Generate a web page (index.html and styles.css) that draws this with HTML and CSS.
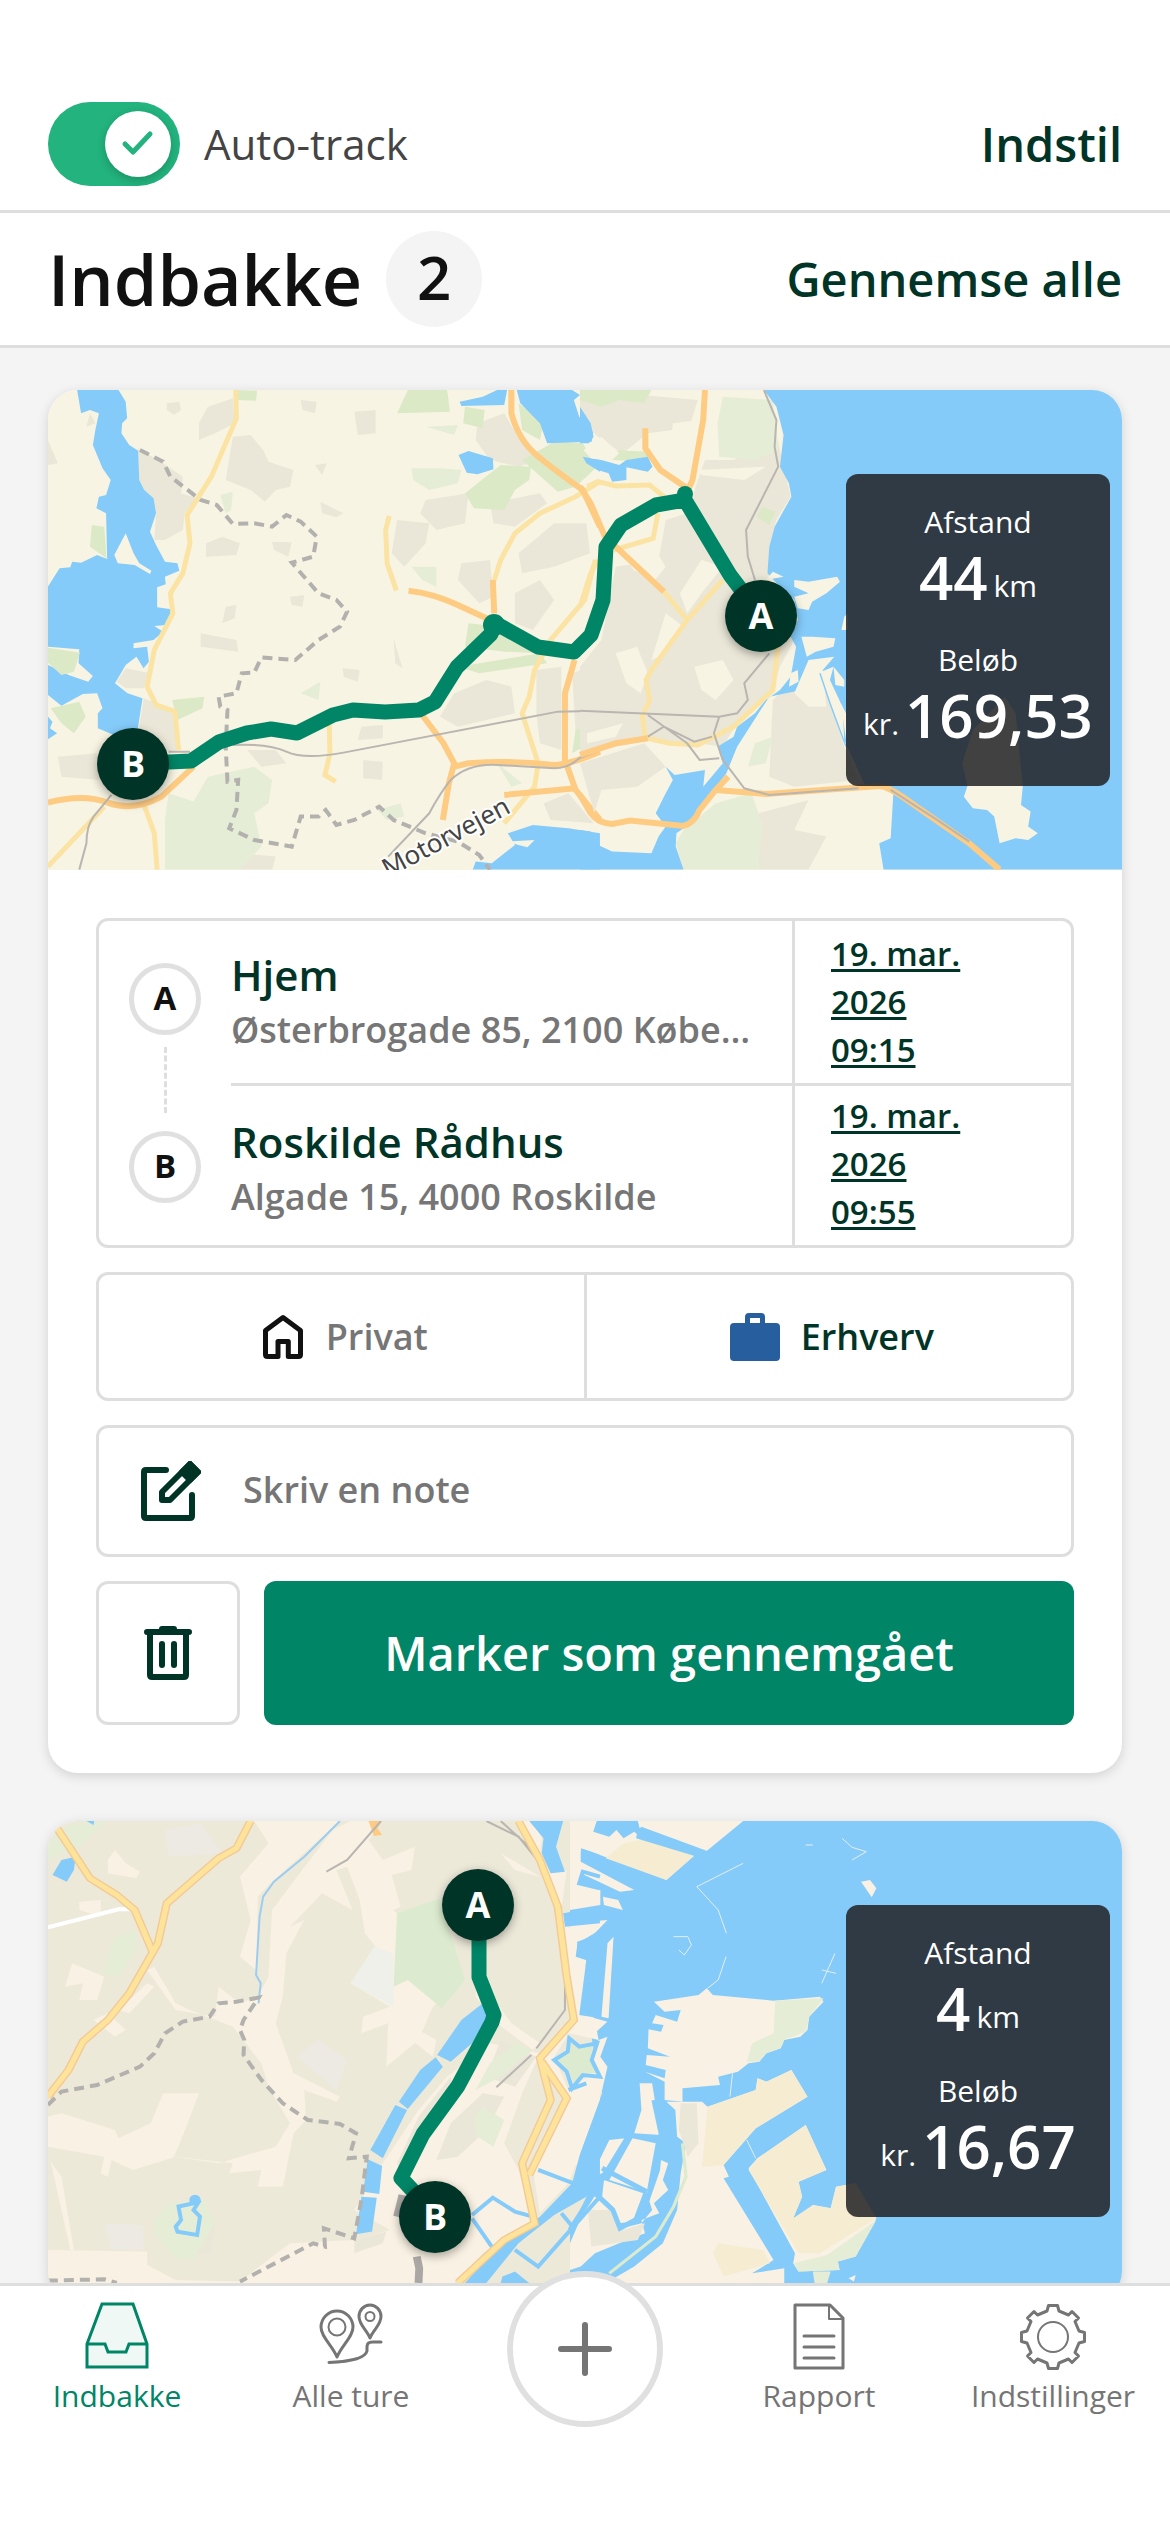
FILE: index.html
```html
<!DOCTYPE html>
<html lang="da">
<head>
    <meta charset="UTF-8">
    <meta name="viewport" content="width=device-width, initial-scale=1.0">
    <title>Indbakke</title>
    <link rel="stylesheet" href="styles.css">
</head>
<body>
    <!-- Auto-track bar -->
    <header class="top-bar">
        <label class="switch-label">
            <span class="switch">
                <input type="checkbox" class="switch-input" checked>
                <span class="switch-knob">
                    <svg width="36" height="30" viewBox="0 0 36 30"><path d="M5 15 L13 23 L30 5" fill="none" stroke="#22b37e" stroke-width="5" stroke-linecap="round" stroke-linejoin="round"/></svg>
                </span>
            </span>
            Auto-track
        </label>
        <button class="link-btn">Indstil</button>
    </header>

    <!-- Page title -->
    <div class="title-bar">
        <h1>Indbakke</h1>
        <span class="count">2</span>
        <button class="link-btn">Gennemse alle</button>
    </div>

    <main class="trips">
        <!-- Trip 1 -->
        <article class="card">
            <div class="map">
                <svg class="map-svg" viewBox="0 0 1074 480" preserveAspectRatio="xMidYMid slice">
                    <rect width="1074" height="480" fill="#f8f4e3"/>
                    <!-- West half -->
                    <g transform="matrix(.3571 0 0 .3333 -8 -10)">
                        <g class="urban">
                            <path d="M275 205 L345 250 L400 290 L395 340 L440 355 L405 400 L400 450 L350 480 L320 480 L325 400 L278 300Z"/>
                            <path d="M470 80 L540 55 L545 130 L490 160 L445 180 L445 130Z"/>
                            <path d="M540 170 L590 165 L625 210 L640 245 L710 270 L700 320 L660 330 L630 365 L590 330 L520 300Z"/>
                            <path d="M355 70 L390 65 L395 90 L375 105 L355 90Z M730 60 L775 65 L770 100 L735 90Z M880 95 L940 90 L940 160 L890 165Z"/>
                            <path d="M785 365 L850 400 L830 412 L790 400Z M465 490 L510 470 L560 490 L550 525 L465 530Z M650 485 L705 487 L695 530 L655 510Z"/>
                            <path d="M520 680 L550 675 L545 715 L510 730Z M450 760 L550 780 L555 815 L450 800Z M990 775 L1015 865 L995 850Z M848 865 L895 870 L890 905 L850 890Z"/>
                            <path d="M700 650 L740 645 L735 680 L705 675Z M770 255 L803 250 L790 285Z M905 1140 L960 1145 L958 1200 L905 1195Z"/>
                            <path d="M290 955 L375 990 L385 1110 L340 1115 L275 1060Z M215 905 L240 865 L310 880 L290 925 L240 925Z"/>
                            <path d="M1225 130 L1300 100 L1350 190 L1400 240 L1340 260 L1260 240 L1220 180Z"/>
                            <path d="M1000 420 L1090 430 L1080 490 L1020 560 L985 520Z M1080 360 L1200 340 L1190 430 L1110 450 L1065 400Z"/>
                            <path d="M1260 370 L1400 340 L1420 370 L1330 440 L1270 430Z M1180 550 L1260 540 L1270 650 L1230 670 L1170 600Z"/>
                            <path d="M1340 520 L1440 430 L1530 430 L1540 520 L1440 560 L1350 580Z M1330 640 L1400 600 L1440 660 L1380 750 L1330 730Z"/>
                            <path d="M1160 940 L1250 900 L1320 920 L1330 1000 L1170 1040 L1120 1010Z M1390 870 L1460 860 L1460 1110 L1400 1090 L1390 1000Z M1490 880 L1568 850 L1568 1010 L1500 1060Z"/>
                            <path d="M900 1040 L960 1035 L960 1075 L890 1080Z M580 1110 L660 1110 L690 1150 L620 1160Z M560 1420 L660 1430 L650 1469 L555 1469Z M1410 1270 L1480 1240 L1550 1330 L1430 1320Z"/>
                            <path d="M50 1130 L160 1120 L165 1200 L60 1190Z M22 180 L50 250 L22 255Z M140 100 L155 130 L130 140Z"/>
                        </g>
                        <g class="park">
                            <path d="M1030 30 L1140 30 L1148 95 L1000 100Z M550 30 L608 32 L605 62 L552 60Z"/>
                            <path d="M1340 70 L1410 130 L1400 180 L1350 150Z M1190 80 L1245 90 L1240 145 L1185 130Z"/>
                            <path d="M1190 340 L1290 255 L1375 260 L1370 300 L1330 330 L1300 390 L1215 385Z M1350 240 L1440 185 L1520 190 L1560 260 L1500 320 L1450 335Z"/>
                            <path d="M145 435 L180 440 L186 535 L140 500Z M30 985 L110 965 L128 1010 L95 1060 L60 1030Z"/>
                            <path d="M370 960 L460 950 L455 985 L385 1020Z M1200 730 L1330 745 L1400 820 L1300 815 L1190 800Z M1170 860 L1400 820 L1420 850 L1230 880Z"/>
                            <path d="M1500 1050 L1560 1030 L1540 1090 L1490 1120Z"/>
                        </g>
                        <g class="wood">
                            <path d="M1040 265 L1120 265 L1180 270 L1170 310 L1090 330 L1045 300Z M1080 140 L1170 135 L1160 165Z"/>
                            <path d="M470 1190 L600 1160 L650 1200 L640 1270 L600 1300 L620 1400 L560 1469 L350 1469 L350 1320 L360 1240 L430 1265Z"/>
                            <path d="M505 345 L540 335 L535 390 L520 400Z M1040 560 L1110 560 L1110 620 L1070 600Z M730 940 L785 905 L780 960Z"/>
                            <path d="M945 1290 L1010 1270 L1020 1310 L970 1320Z M1280 1150 L1350 1210 L1320 1220Z"/>
                        </g>
                        <g class="water">
                            <path d="M104 30 H220 L240 65 L244 115 L230 130 L228 160 L250 195 L275 212 L278 300 L292 330 L318 355 L325 400 L308 455 L325 495 L350 545 L385 550 L390 572 L350 590 L352 613 L328 622 V682 L368 688 L355 735 L320 738 L345 755 L318 780 L262 790 V805 L300 800 L305 845 L290 865 L270 830 L240 855 L210 910 L245 940 L287 955 L272 1060 L200 1062 L162 1045 V1000 L175 985 L160 940 L120 942 L60 977 L22 945 V620 L55 565 L85 562 L90 545 L115 548 L160 525 L188 537 L185 400 L158 385 L165 350 L185 345 L198 300 L175 265 L148 195 L155 150 L165 100 L140 90 L115 100Z"/>
                            <path d="M22 1010 L35 1025 L28 1045 L48 1060 L22 1078Z"/>
                            <path d="M1175 65 L1240 50 L1280 30 H1308 L1300 75 L1180 78Z M1172 225 L1200 213 L1268 235 L1270 268 L1225 283 L1195 278Z"/>
                            <path d="M1335 30 H1490 L1512 45 L1495 60 L1510 110 L1550 150 L1545 185 L1420 190 L1400 130 L1345 70Z M1520 230 L1568 240 V275 L1530 250Z"/>
                            <path d="M1212 1469 L1220 1445 L1265 1450 L1330 1395 L1310 1360 L1380 1335 L1480 1345 L1568 1360 V1469Z"/>
                        </g>
                        <path fill="#f8f4e3" d="M22 800 L110 808 L108 850 L148 888 L135 905 L80 885 L22 855Z M240 460 L262 520 L278 550 L312 572 L308 582 L265 555 L218 550 L208 525Z M1310 1385 L1385 1380 L1365 1402 L1340 1395Z"/>
                        <path class="park-fill" d="M22 803 L112 818 L95 875 L60 885 L22 848Z"/>
                        <g class="road">
                            <path d="M548 30 L550 115 L480 290 L412 405 L420 490 L400 580 L365 640 L372 700 L320 810 L300 920 L325 975 L378 995 L388 1110"/>
                            <path d="M978 408 L968 450 L972 550 L998 632 M1568 305 L1500 350 L1400 400 L1330 460 L1290 540 L1272 600 M1555 540 L1525 660 L1430 780 L1385 870 L1370 950 L1350 1000 L1395 1150 L1385 1220 L1300 1330"/>
                            <path d="M810 1035 L812 1120 L798 1185 L828 1205 M22 1460 L180 1280 M290 1270 L320 1360 L328 1469"/>
                        </g>
                        <g class="motorway">
                            <path d="M22 1268 Q120 1240 190 1268 T340 1250 L430 1160"/>
                            <path d="M1320 30 V100 Q1340 180 1390 225 T1520 330 L1568 440 M1268 600 L1272 700 M1032 632 Q1100 640 1170 675 L1250 715"/>
                            <path d="M1070 1005 L1130 1090 L1160 1150 L1145 1210 L1128 1320 M1160 1160 L1200 1150 Q1320 1140 1440 1155 Q1480 1155 1568 1115"/>
                            <path d="M1497 840 L1470 940 V1140 L1500 1230 L1568 1320 M1300 1245 L1500 1225"/>
                        </g>
                        <g class="rail">
                            <path d="M360 1115 L420 1115 M540 1095 Q640 1090 690 1115 T850 1118 L1450 995 L1568 992 M1568 1110 L1510 1135 Q1480 1165 1440 1165 L1280 1155 Q1200 1150 1150 1200 Q1120 1240 1090 1300 L975 1430 M200 1245 L150 1310 Q130 1340 130 1390 L110 1469"/>
                        </g>
                        <path class="border" d="M280 210 L345 245 L365 290 L450 360 L495 375 L540 432 L600 430 L650 440 L690 405 L730 425 L775 470 L765 530 L705 548 L780 640 L830 660 L860 695 L840 740 L780 780 L715 840 L620 832 L600 878 L565 880 L550 940 L500 950 L505 980 L525 990 L520 1100 L525 1205 L555 1200 L550 1290 L530 1345 L600 1380 L705 1400 L730 1310 L780 1310 L800 1290 L830 1335 L880 1320 L950 1280 L990 1320 L1080 1360 L1170 1385 L1230 1425 L1260 1469"/>
                    </g>
                    <!-- East half -->
                    <g transform="matrix(.3571 0 0 .3333 532 -10)">
                        <g class="urban">
                            <path d="M0 60 L120 40 L330 60 L310 130 L260 150 L190 160 L120 220 L60 180 L0 120Z"/>
                            <path d="M350 240 L430 240 L500 200 L550 160 L570 260 L590 350 L550 420 L530 500 L530 600 L600 780 L560 860 L540 930 L440 1030 L400 1100 L330 1090 L200 1080 L100 1100 L0 1120 V860 L60 780 L100 560 L220 540 L240 420 L300 400 L330 300Z"/>
                            <path d="M620 880 L660 850 L700 960 L740 1100 L780 1200 L600 1220 L530 1190 L540 960Z M0 1150 L180 1090 L240 1160 L160 1220 L60 1230 L40 1300Z M500 1300 L640 1260 L600 1350 L690 1370 L640 1469 L500 1469Z"/>
                        </g>
                        <g class="wood">
                            <path d="M400 50 L540 60 L555 210 L490 240 L390 230 L385 130Z M490 1090 L540 1070 L520 1150 L470 1160Z"/>
                            <path d="M290 1350 L380 1270 L480 1240 L510 1330 L500 1469 H290 L268 1390Z"/>
                        </g>
                        <g class="park">
                            <path d="M0 30 L200 30 L180 70 L110 60 L60 80 L0 60Z M80 210 L200 215 L180 245 L90 240Z M510 380 L548 395 L530 435 L495 410Z"/>
                        </g>
                        <path fill="#f8f4e3" d="M10 210 L60 170 L110 220 L90 240 L30 235Z M260 130 L330 120 L320 200 L250 215Z M120 520 L200 490 L240 560 L210 600 L150 570Z M340 540 L400 560 L340 640 L300 700 L280 640Z M100 820 L160 800 L190 880 L170 940 L130 910Z M240 700 L290 740 L240 820 L200 840Z M20 1060 L120 1030 L100 1070 L20 1090Z M330 270 L520 260 L460 300 L340 285Z M320 860 L400 840 L430 900 L380 960 L340 930Z"/>
                        <g class="water">
                            <path d="M515 30 H1530 V1469 H850 L838 1390 L870 1375 L878 1230 L800 1220 L770 1150 L740 1080 L735 980 L700 900 L710 860 L665 880 L670 900 L620 930 L530 950 L470 1050 L440 1100 L410 1180 L370 1235 L310 1330 L270 1360 L268 1400 L290 1469 H0 V1350 L30 1355 L40 1390 L90 1415 L200 1420 L220 1370 L240 1340 L212 1300 L240 1240 L260 1200 L240 1160 L265 1185 L350 1170 L345 1220 L400 1150 L385 1100 L430 1070 L440 1040 L490 1000 L520 960 L560 930 L590 890 L605 800 L590 770 L610 720 L600 660 L560 620 L525 580 L530 500 L545 440 L592 350 L585 310 L560 260 L570 165 L550 80Z"/>
                            <path d="M0 80 L30 130 L38 170 L25 190 L0 190Z M10 235 L60 240 L110 255 L130 240 L190 230 L203 260 L190 275 L130 262 V300 L90 305 L80 280 L50 270Z"/>
                        </g>
                        <path fill="#f8f4e3" d="M600 600 L640 605 L720 590 L728 605 L690 640 L650 665 L640 690 L610 685 L600 650 L640 640 L600 620Z M620 770 L650 770 L715 775 L710 800 L660 815 L635 830Z M740 710 L750 700 V750 L732 750Z M540 575 L570 590 L520 600Z M590 880 L610 870 L612 905 L585 920Z M640 840 L712 830 L680 870 L690 980 L640 980 L600 940Z M710 860 L740 900 V920 L715 915Z M730 970 L745 1000 V1080Z"/>
                        <path fill="#f8f4e3" d="M1085 1218 L1070 1150 L1100 1050 L1190 950 L1220 1000 L1240 1218 L1235 1275 L1262 1295 L1255 1340 L1282 1360 L1255 1380 L1220 1375 L1175 1390 L1160 1310 L1140 1290 L1100 1285 L1075 1250Z"/>
                        <path class="canal" stroke-width="4" d="M672 880 L700 970 L745 1100"/>
                        <g class="road">
                            <path d="M20 320 L50 305 L100 318 L195 315 L235 350 M95 510 L205 475 L218 400 M0 680 L30 580 L50 540 M400 600 L300 720 L200 870 L185 900 L195 960 L175 1010 L182 1070 M235 635 L300 720 M555 800 L540 930 L430 1040 L330 1095 L250 1090 L190 1075"/>
                        </g>
                        <g class="motorway">
                            <path d="M350 30 L345 120 L315 300 L300 335 M183 145 V205 L225 270 L300 325 M0 320 L30 370 L70 470 L140 540 L235 635"/>
                            <path d="M0 1125 L100 1090 L190 1075 M0 1245 L30 1300 Q50 1330 90 1332 L140 1322 L290 1338 Q320 1330 335 1290 L380 1230 L415 1190 M380 1230 L520 1242 L840 1218 Q860 1220 900 1248 L1090 1390 L1175 1469"/>
                        </g>
                        <g class="rail">
                            <path d="M515 30 L550 120 L545 200 L555 260 L465 450 L470 530 L490 600 M530 820 L460 910 L470 960 L440 1000 L390 1010 L0 992 M390 1010 L375 1060 L400 1140 L460 1225 L530 1245 L780 1225 M190 1005 L300 1090 L335 1140 L390 1135 M190 1070 L235 1040 L320 1085 L370 1070 M870 1230 L1000 1320 L1090 1385"/>
                        </g>
                    </g>
                    <text class="map-label" transform="translate(340 488) rotate(-28)">Motorvejen</text>
                    <path class="route" d="M85 374 L121 372 L143 371 L171 352 L199 343 L223 339 L249 343 L285 325 L305 320 L337 322 L371 320 L387 312 L409 277 L443 244 L447 233 L490 257 L526 262 L543 245 L555 210 L558 157 L573 135 L608 115 L637 110 L682 185 L713 226"/>
                    <circle cx="446" cy="235" r="11" fill="#008566"/>
                    <circle cx="637" cy="104" r="8" fill="#008566"/>
                    <circle class="marker" cx="713" cy="226" r="36"/>
                    <text class="marker-text" x="713" y="239">A</text>
                    <circle class="marker" cx="85" cy="374" r="36"/>
                    <text class="marker-text" x="85" y="387">B</text>
                </svg>
                <div class="stats">
                    <span class="stat-label">Afstand</span>
                    <div class="stat-value"><strong>44</strong><small>km</small></div>
                    <span class="stat-label">Beløb</span>
                    <div class="stat-value"><small>kr.</small><strong>169,53</strong></div>
                </div>
            </div>

            <div class="card-body">
                <div class="route-box">
                    <div class="points">
                        <span class="point">A</span>
                        <span class="point-line"></span>
                        <span class="point">B</span>
                    </div>
                    <div class="place">
                        <span class="place-name">Hjem</span>
                        <span class="place-address">Østerbrogade 85, 2100 København Ø</span>
                    </div>
                    <div class="date"><a href="#">19. mar. 2026<br>09:15</a></div>
                    <div class="place">
                        <span class="place-name">Roskilde Rådhus</span>
                        <span class="place-address">Algade 15, 4000 Roskilde</span>
                    </div>
                    <div class="date"><a href="#">19. mar. 2026<br>09:55</a></div>
                </div>

                <div class="choices">
                    <label class="choice">
                        <input type="radio" name="type1" class="choice-input">
                        <svg width="44" height="48" viewBox="0 0 44 48" fill="none" stroke="#111" stroke-width="5" stroke-linejoin="round"><path d="M22 4.500 L39.500 17.500 V41.500 Q39.500 43.500 37.500 43.500 H27.300 V28.500 H17 V43.500 H6.500 Q4.500 43.500 4.500 41.500 V17.500Z"/></svg>
                        Privat
                    </label>
                    <label class="choice">
                        <input type="radio" name="type1" class="choice-input" checked>
                        <svg width="50" height="48" viewBox="0 0 50 48" fill="#275f9e"><path fill-rule="evenodd" d="M15 10 V4 Q15 0 19 0 H31 Q35 0 35 4 V10 H46 Q50 10 50 14 V44 Q50 48 46 48 H4 Q0 48 0 44 V14 Q0 10 4 10Z M20 5 V10 H30 V5Z"/></svg>
                        Erhverv
                    </label>
                </div>

                <label class="note">
                    <svg width="60" height="60" viewBox="0 0 60 60" fill="none" stroke="#003427" stroke-width="6" stroke-linecap="round" stroke-linejoin="round"><path d="M25 9 H5 Q3 9 3 11 V55 Q3 57 5 57 H49 Q51 57 51 55 V34"/><path d="M21 39 V31 L49 3 L57 11 L29 39Z"/><path d="M41 11 L49 3 L57 11 L49 19Z" fill="#003427"/></svg>
                    <input type="text" class="note-input" placeholder="Skriv en note" aria-label="Skriv en note">
                </label>

                <div class="actions">
                    <button class="delete-btn" aria-label="Slet">
                        <svg width="48" height="54" viewBox="0 0 48 54" fill="none" stroke="#003427" stroke-width="6" stroke-linecap="round" stroke-linejoin="round"><path d="M3 6 H45 M18 3 H30 M6 6 V49 Q6 51 8 51 H40 Q42 51 42 49 V6 M18 18 V39 M30 18 V39"/></svg>
                    </button>
                    <button class="primary-btn">Marker som gennemgået</button>
                </div>
            </div>
        </article>

        <!-- Trip 2 -->
        <article class="card">
            <div class="map">
                <svg class="map-svg" viewBox="0 0 1074 480" preserveAspectRatio="xMidYMid slice">
                    <rect width="1074" height="480" fill="#ede9d9"/>
                    <!-- East half -->
                    <g transform="matrix(.3571 0 0 .3333 522 -11)">
                        <path class="water" d="M0 300 L105 290 V33 H1548 V1419 H120 L0 1419 V1260 L60 1130 L20 1040 L90 850 L60 680 L100 640 L0 620Z"/>
                        <path fill="#84cbfa" d="M60 33 H200 V300 H0 V150 L40 115Z"/>
                        <g fill="#f9f1e3">
                            <path d="M0 33 H75 L65 65 L110 80 L130 60 L150 85 L180 65 L190 75 L350 135 L270 210 L60 125 L30 115 L30 155 L180 240 L140 245 L30 190 L22 220 L85 240 V285 L0 300Z M190 33 H485 L380 125 L195 55Z M92 260 L135 270 L148 300 L95 285Z"/>
                            <path d="M0 340 L105 330 L60 380 L20 395 L15 440 L45 470 L30 600 L70 625 L105 635 L75 660 L80 690 L0 670Z M105 400 L122 380 L108 625 L88 620Z"/>
                            <path d="M235 575 L265 605 L310 600 L300 635 L240 615 L230 640 L262 645 L255 665 L220 658 L218 715 L280 740 L215 735 L212 765 L268 780 L265 805 L210 785 L265 815 V870 L315 875 V835 L420 825 L415 800 L470 785 L500 760 L530 755 L550 730 L590 715 L600 690 L645 680 L665 660 L670 620 L710 575 L700 560 L570 572 L400 555 L383 535 L360 555 L300 565Z"/>
                            <path d="M315 875 H370 L385 890 L520 840 L525 805 L550 815 L620 780 L665 860 L520 955 L430 1065 L445 1100 L430 1105 L570 1350 L510 1390 L600 1375 V1419 H100 L180 1370 L260 1300 L300 1200 L310 1090 L325 1000 L300 980 L295 900 L270 875Z"/>
                            <path d="M80 690 L105 680 L85 740 L105 770 L90 840 L0 1050 V830 L50 800Z M195 820 L230 820 L245 920 L255 975 L180 970 L200 900Z M175 985 L240 1000 L215 1145 L110 1110Z M95 1110 L205 1150 L175 1235 L135 1240 L120 1190 L90 1160Z M10 1055 L50 1010 L30 1080Z"/>
                            <path d="M0 1300 L60 1150 L120 1200 L145 1255 L200 1240 L230 1200 L215 1150 L255 1050 L275 1060 L260 1110 L275 1140 L235 1180 L250 1210 L200 1230 L210 1270 L160 1290 L70 1330 L30 1370 L0 1380Z M110 990 L155 985 L130 1040 L90 1090 L60 1100Z"/>
                            <path d="M500 1075 L525 1045 L660 945 L718 1080 L640 1115 L650 1160 L625 1225 L650 1220 L680 1185 L730 1195 L745 1130 L800 1120 L858 1225 L800 1340 L750 1355 L755 1380 L640 1385 L625 1360 L630 1330Z"/>
                            <path d="M815 215 L840 210 L858 235 L845 262Z M780 1405 L800 1395 L795 1415Z"/>
                        </g>
                        <g fill="#f6ecd2">
                            <path d="M220 85 L350 135 L270 210 L100 145 L150 100Z M385 890 L520 840 L525 805 L550 815 L620 780 L665 860 L520 955 L430 1065 L370 1070Z M415 1300 L540 1320 L560 1360 L430 1400 L400 1330Z"/>
                            <path d="M525 1045 L660 945 L718 1080 L640 1115 L650 1160 L625 1225 L680 1185 L730 1195 L745 1130 L800 1120 L858 1225 L700 1330 L640 1330 L500 1080Z"/>
                        </g>
                        <g class="urban">
                            <path d="M310 880 L355 880 L360 1000 L330 1040 L305 960Z M50 1200 L120 1200 L150 1260 L210 1240 L190 1290 L60 1310Z M0 890 L50 850 L30 950 L0 1000Z"/>
                        </g>
                        <g class="wood">
                            <path d="M575 572 L710 565 L670 620 L660 665 L600 690 L590 715 L550 730 L530 755 L495 755 L510 700 L570 670Z M625 1360 L720 1335 L858 1230 L800 1340 L750 1355 L755 1380 L640 1385Z M680 1385 L730 1385 L720 1419 H685Z"/>
                        </g>
                        <path class="water" d="M190 60 L200 50 L390 125 L370 145 L185 85Z"/>
                        <g class="canal" stroke-width="5">
                            <path d="M90 1075 L215 1145 M0 1260 L60 1160 L160 985 M235 870 L255 970 L245 1080 L200 1220 L140 1255 L120 1200 L60 1140"/>
                        </g>
                        <path fill="none" stroke="#dcebcf" stroke-width="9" d="M315 1000 L325 1100 L290 1190 L240 1280 L110 1390"/>
                        <path class="shoal" d="M355 230 L485 160 M355 230 L415 300 L438 370 M437 440 L415 510 L385 535 M762 85 L790 112 L830 125 L790 150 M742 430 L705 520 M705 480 L745 490 M660 105 L680 105 M495 990 L520 1045 M455 790 L448 860 M290 380 L330 380 L340 405 L320 435 L305 420"/>
                    </g>
                    <!-- West half -->
                    <g transform="matrix(.3571 0 0 .3333 -8 -11)">
                        <g fill="#f9f1e3">
                            <path d="M600 33 L840 33 L650 215 L610 260 L605 480 L560 440 L590 330 L560 200 L640 100Z"/>
                            <path d="M870 33 L960 33 L920 90 L960 150 L1050 110 L1040 180 L985 195 L1010 290 L990 300 L1190 510 L1100 590 L1060 690 L970 770 L975 640 L900 670 L905 620 L980 590 L870 520 L940 410 L910 370 L895 270 L860 170 L830 180 L875 300 L790 250 L700 350 L740 330 L690 430 L680 560 L660 640 L710 790 L840 860 L830 875 L740 840 L745 930 L710 970 L680 1130 L610 1130 L620 1080 L530 1090 L540 1060 L380 1040 L260 1080 L200 1050 L190 1100 L170 1090 L180 1040 L22 1010 V920 L60 910 L210 960 L220 985 L310 940 L345 850 L445 850 L410 950 L375 1040 L500 1060 L660 1010 L700 940 L640 830 L620 760 L540 650 L420 600 L380 580 L320 470 L300 480 L380 600 L490 620 L500 530 L560 580 L610 560 L640 500 L650 300 L720 200 L820 60Z"/>
                            <path d="M190 150 L210 120 L240 160 L280 185 L270 205 L190 190Z M110 275 L170 270 L170 320 L110 300Z M90 460 L180 500 L160 570 L110 570 L120 520 L70 530Z M150 630 L190 610 L240 660 L210 680Z M220 600 L300 520 L320 530 L250 610Z"/>
                            <path d="M30 1055 L60 1100 L95 1320 L85 1320Z M22 1320 L300 1325 L300 1365 L380 1410 L560 1415 L700 1300 L880 1290 L980 1260 L880 1200 L960 1060 L1060 900 L1140 800 L1260 700 L1400 730 L1350 850 L1300 1000 L1340 1080 L1380 1240 L1240 1330 L1160 1419 L22 1419Z"/>
                            <path d="M1040 690 L1100 740 L1110 690 L1060 660Z M1220 490 L1320 640 L1400 700 L1380 720 L1280 640 L1220 560Z M1290 130 L1370 180 L1400 200 L1330 180Z"/>
                            <path d="M1350 33 L1380 33 L1405 85 L1400 130 L1430 190 L1475 180 L1460 300 L1480 350 L1505 400 L1500 440 L1530 450 L1510 615 L1500 640 L1440 740 L1480 840 L1568 830 L1568 870 L1510 1040 L1480 1120 L1400 1210 L1380 1080 L1480 870 L1410 750 L1495 630 L1475 500 L1450 290Z"/>
                        </g>
                        <g class="urban">
                            <path d="M1150 940 L1240 850 L1300 860 L1250 960 L1170 1040 L1110 1050Z M1060 920 L1150 800 L1160 850 L1090 960 L1020 1110 L1000 1060Z M1290 690 L1390 740 L1330 830 L1250 800Z M880 1290 L970 1265 L960 1300 L880 1330Z M400 1230 L490 1250 L480 1330 L400 1340Z"/>
                        </g>
                        <g class="wood">
                            <path d="M22 90 L90 40 L190 33 L110 110 L22 150Z M210 380 L270 360 L270 420 L220 500 L175 490Z M320 1230 L360 1180 L460 1170 L490 1240 L430 1350 L380 1345 L320 1270Z"/>
                            <path d="M1215 920 L1240 890 L1300 930 L1270 1010 L1225 980Z M1260 760 L1330 700 L1380 720 L1290 800 L1220 840Z"/>
                        </g>
                        <path fill="#dcebcf" d="M1000 310 L1120 265 L1190 510 L1125 595 L1030 510 L990 530Z"/>
                        <path fill="#ede9e3" d="M350 60 L450 40 L510 130 L360 140Z M720 740 L780 690 L860 750 L830 840Z M180 1240 L290 1245 L290 1320 L200 1320Z"/>
                        <path fill="#eff0ea" d="M935 410 L990 430 L990 590 L870 520Z"/>
                        <g class="water">
                            <path d="M60 150 L100 140 L95 180 L75 215 L35 195Z M130 33 H152 L150 45Z"/>
                            <path d="M1240 580 L1255 620 L1210 700 L1150 755 L1112 735 L1180 630Z M1108 742 L1128 770 L1030 897 L1005 875 L1065 780Z M995 885 L1028 900 L960 1045 L925 1020Z M918 1048 L958 1068 L950 1152 L905 1145Z M900 1160 L943 1163 L930 1265 L885 1273Z"/>
                            <path d="M1370 33 H1465 L1445 110 L1470 185 L1430 190 L1405 130 L1410 85Z M1515 115 L1568 135 V160 L1515 150Z M1465 310 L1568 290 V340 L1470 350Z M1505 400 L1568 360 V625 L1510 615 L1530 450 L1505 440Z"/>
                            <path d="M1568 870 V1100 L1530 1160 L1440 1215 L1340 1300 L1250 1419 H1190 L1300 1290 L1400 1220 L1490 1120 L1510 1040Z"/>
                            <path d="M1295 1400 L1330 1385 L1370 1419 H1290Z M1500 1380 L1568 1350 V1419 L1500 1400Z"/>
                        </g>
                        <path fill="#dcebcf" d="M1485 690 L1510 715 L1550 700 L1540 750 L1568 790 L1520 790 L1495 820 L1480 780 L1445 750 L1480 730Z"/>
                        <g class="canal" stroke-width="4">
                            <path d="M1482 685 L1510 710 L1560 700 L1545 750 L1568 800 L1520 795 L1490 835 L1475 785 L1440 750 L1478 725Z M1480 840 L1530 820"/>
                            <path d="M1568 200 L1520 185 L1510 220 L1568 235 M1395 1080 L1568 1150 M1210 1215 L1268 1163 L1330 1205 L1380 1220 M1210 1225 L1265 1310 M1330 1320 L1395 1370 L1568 1160 M1460 1210 L1495 1255"/>
                            <path d="M430 1160 L445 1175 L430 1200 L448 1220 L440 1275 L385 1265 L380 1250 L395 1230 L388 1190 L430 1180"/>
                        </g>
                        <circle cx="434" cy="1170" r="16" fill="#84cbfa"/>
                        <path class="stream" d="M840 33 L740 140 L655 215 L625 260 L615 320 L605 495 L618 520 L612 580"/>
                        <path fill="#fecb83" d="M920 33 H958 L945 55 L958 75 L935 78Z"/>
                        <path fill="none" stroke="#fff" stroke-width="12" d="M22 352 L220 298 L265 297 L272 320"/>
                        <g class="rail">
                            <path d="M955 33 L860 150 L802 185 M1250 33 L1340 80 L1400 160 L1440 280 L1470 460 V600 L1390 715 M1290 33 L1390 130 L1450 300 M1376 735 L1278 832"/>
                        </g>
                        <path fill="none" stroke="#aaa7a4" stroke-width="22" d="M1055 1340 L1062 1375 L1060 1419 M1015 1155 L1000 1220"/>
                        <g class="road-case">
                            <path d="M45 50 L140 205 L215 255 L265 300 L315 425 M590 33 L550 115 L500 145 L355 280 L330 400 L250 550 L190 630 L120 695 L80 780 L22 860"/>
                            <path d="M1340 33 L1400 150 L1450 290 L1475 500 L1495 630 L1400 745 L1430 870 L1350 1060 L1385 1240 L1300 1290 L1170 1419 M1405 755 L1475 865 L1370 1095"/>
                        </g>
                        <g class="road-core">
                            <path d="M45 50 L140 205 L215 255 L265 300 L315 425 M590 33 L550 115 L500 145 L355 280 L330 400 L250 550 L190 630 L120 695 L80 780 L22 860"/>
                            <path d="M1340 33 L1400 150 L1450 290 L1475 500 L1495 630 L1400 745 L1430 870 L1350 1060 L1385 1240 L1300 1290 L1170 1419 M1405 755 L1475 865 L1370 1095"/>
                        </g>
                        <path class="border" d="M22 885 L60 845 L160 825 L280 770 L320 730 L350 670 L400 635 L475 620 L500 580 L550 575 L612 563 L570 630 L560 660 L572 690 L570 735 L620 810 L680 880 L750 930 L840 942 L885 970 L865 1045 L915 1040 L900 1170 L880 1285 L795 1255 L798 1310 L765 1300 L560 1415 M22 1412 L180 1408 L215 1419"/>
                    </g>
                    <path class="route" d="M431 85 V156 L446 194 L444 201 L410 265 L375 313 L353 357 L369 374 L387 385"/>
                    <circle class="marker" cx="430" cy="84" r="36"/>
                    <text class="marker-text" x="430" y="97">A</text>
                    <circle class="marker" cx="387" cy="396" r="36"/>
                    <text class="marker-text" x="387" y="409">B</text>
                </svg>
                <div class="stats">
                    <span class="stat-label">Afstand</span>
                    <div class="stat-value"><strong>4</strong><small>km</small></div>
                    <span class="stat-label">Beløb</span>
                    <div class="stat-value"><small>kr.</small><strong>16,67</strong></div>
                </div>
            </div>
        </article>
    </main>

    <!-- Bottom navigation -->
    <nav class="tab-bar">
        <a href="#" class="tab active">
            <svg width="66" height="72" viewBox="0 0 66 72" fill="#eff8f5" stroke="#008566" stroke-width="3"><path d="M18 3 H49 L63 43 V66 H3 V43Z"/><path fill="none" d="M3 43 H21 L24 51 H42 L45 43 H63"/></svg>
            Indbakke
        </a>
        <a href="#" class="tab">
            <svg width="66" height="72" viewBox="0 0 66 72" fill="none" stroke="#757575" stroke-width="3" stroke-linecap="round" stroke-linejoin="round"><path d="M19 56 C14 44 3 36 3 26 A16 16 0 0 1 35 26 C35 36 24 44 19 56Z"/><circle cx="19" cy="26" r="8.500" stroke-width="2"/><path d="M52 37 C49 29 41 24 41 15.500 A11 11.500 0 0 1 63 15.500 C63 24 55 29 52 37Z"/><circle cx="52" cy="15.500" r="4.500" stroke-width="2"/><path d="M11 61.500 C28 61 47 58 49 50 C49 45 48 41 55 41 L63 41"/></svg>
            Alle ture
        </a>
        <button class="add-btn" aria-label="Tilføj tur">
            <svg width="60" height="60" viewBox="0 0 60 60" stroke="#757575" stroke-width="6" stroke-linecap="round"><path d="M6 30 H54 M30 6 V54"/></svg>
        </button>
        <a href="#" class="tab">
            <svg width="52" height="72" viewBox="0 0 52 72" fill="none" stroke="#757575" stroke-width="3" stroke-linejoin="round"><path d="M2 4 H37 L50 17 V67 H2Z"/><path stroke-width="2" d="M36 4 V18 H50"/><path stroke-width="3" stroke-linecap="round" d="M11 35 H41 M11 46 H41 M11 57 H41"/></svg>
            Rapport
        </a>
        <a href="#" class="tab">
            <svg width="72" height="72" viewBox="-36 -36 72 72" fill="none" stroke="#757575" stroke-width="3" stroke-linejoin="round"><path d="M-4.500 -31.500 H4.500 L6 -26 L15.500 -22 L19 -25.500 L25.500 -19 L22 -15.500 L26 -6 L31.500 -4.500 V4.500 L26 6 L22 15.500 L25.500 19 L19 25.500 L15.500 22 L6 26 L4.500 31.500 H-4.500 L-6 26 L-15.500 22 L-19 25.500 L-25.500 19 L-22 15.500 L-26 6 L-31.500 4.500 V-4.500 L-26 -6 L-22 -15.500 L-25.500 -19 L-19 -25.500 L-15.500 -22 L-6 -26Z"/><circle r="15" stroke-width="2"/></svg>
            Indstillinger
        </a>
    </nav>
</body>
</html>
```
FILE: styles.css
```css
/* Global Styles */
* {
    box-sizing: border-box;
}

body {
    margin: 0;
    height: 100vh;
    display: flex;
    flex-direction: column;
    background: #f4f4f4;
    color: #111;
    font-family: "Open Sans", "Noto Sans", sans-serif;
    font-size: 36px;
}

svg {
    flex-shrink: 0;
}

button,
input {
    font: inherit;
    color: inherit;
}

button {
    padding: 0;
    border: none;
    background: none;
    cursor: pointer;
}

a {
    color: inherit;
}

/* Auto-track bar */
.top-bar {
    display: flex;
    align-items: center;
    justify-content: space-between;
    padding: 102px 48px 24px;
    background: #fff;
    border-bottom: 3px solid #dedede;
}

.switch-label {
    display: flex;
    align-items: center;
    gap: 24px;
    color: #444;
    font-size: 42px;
    line-height: 84px;
}

.switch {
    display: grid;
    align-items: center;
}

.switch-input {
    grid-area: 1 / 1;
    appearance: none;
    width: 132px;
    height: 84px;
    margin: 0;
    border-radius: 42px;
    background: #bbb;
}

.switch-input:checked {
    background: #22b37e;
}

.switch-knob {
    grid-area: 1 / 1;
    justify-self: end;
    display: flex;
    align-items: center;
    justify-content: center;
    width: 66px;
    height: 66px;
    margin-right: 9px;
    border-radius: 50%;
    background: #fff;
    box-shadow: 0 3px 9px rgba(0, 0, 0, 0.2);
}

.link-btn {
    color: #003427;
    font-size: 47px;
    font-weight: 600;
    line-height: 60px;
}

/* Page title */
.title-bar {
    display: flex;
    align-items: center;
    gap: 24px;
    padding: 18px 48px;
    background: #fff;
    border-bottom: 3px solid #dedede;
}

.title-bar h1 {
    margin: 0;
    font-size: 70px;
    font-weight: 600;
    line-height: 96px;
}

.title-bar .link-btn {
    margin-left: auto;
}

.count {
    width: 96px;
    height: 96px;
    border-radius: 50%;
    background: #f4f4f4;
    font-size: 60px;
    font-weight: 600;
    line-height: 93px;
    text-align: center;
}

/* Trip cards */
.trips {
    flex: 1;
    min-height: 0;
    overflow-y: auto;
    scrollbar-width: none;
    padding: 42px 48px 0;
}

.card {
    margin-bottom: 48px;
    border-radius: 30px;
    overflow: hidden;
    background: #fff;
    box-shadow: 0 3px 12px rgba(0, 0, 0, 0.14);
}

.card-body {
    display: flex;
    flex-direction: column;
    gap: 24px;
    padding: 48px;
}

/* Map */
.map {
    position: relative;
}

.map-svg {
    display: block;
    width: 100%;
    height: 480px;
}

.urban {
    fill: #ebe7d8;
}

.park,
.park-fill {
    fill: #dbe9c7;
}

.wood {
    fill: #e5edd7;
}

.water {
    fill: #84cbfa;
}

.canal {
    fill: none;
    stroke: #84cbfa;
}

.canal path,
.shoal,
.stream,
.rail path,
.road path,
.motorway path,
.border {
    vector-effect: non-scaling-stroke;
}

.stream {
    fill: none;
    stroke: #9ccdf0;
    stroke-width: 2;
}

.shoal {
    fill: none;
    stroke: #e4eef0;
    stroke-width: 1;
}

.road {
    fill: none;
    stroke: #fbe3a3;
    stroke-width: 5;
}

.motorway {
    fill: none;
    stroke: #fecb83;
    stroke-width: 6;
}

.road-case {
    fill: none;
    stroke: #f3c995;
    stroke-width: 23;
}

.road-core {
    fill: none;
    stroke: #fee39a;
    stroke-width: 15;
}

.rail {
    fill: none;
    stroke: #b9b5b0;
    stroke-width: 2;
}

.border {
    fill: none;
    stroke: #b3b1ae;
    stroke-width: 4;
    stroke-dasharray: 10 6;
}

.map-label {
    fill: #444;
    stroke: #fff;
    stroke-width: 4;
    paint-order: stroke;
    font-family: "Noto Sans", sans-serif;
    font-size: 26px;
}

.route {
    fill: none;
    stroke: #008566;
    stroke-width: 15;
    stroke-linejoin: round;
}

.marker {
    fill: #003427;
    filter: drop-shadow(0 3px 5px rgba(0, 0, 0, 0.35));
}

.marker-text {
    fill: #fff;
    font-size: 36px;
    font-weight: 700;
    text-anchor: middle;
}

.stats {
    position: absolute;
    top: 84px;
    right: 12px;
    display: flex;
    flex-direction: column;
    align-items: center;
    width: 264px;
    height: 312px;
    padding-top: 27px;
    border-radius: 12px;
    background: rgba(32, 33, 35, 0.85);
    color: #fff;
}

.stat-label {
    font-size: 30px;
    line-height: 42px;
}

.stat-value {
    display: flex;
    align-items: flex-end;
    gap: 6px;
    margin-bottom: 28px;
}

.stat-value strong {
    font-size: 60px;
    font-weight: 600;
    line-height: 68px;
}

.stat-value small {
    font-size: 30px;
    line-height: 51px;
}

/* Route details */
.route-box {
    display: grid;
    grid-template-columns: 132px 1fr 279px;
    grid-template-rows: 165px 159px;
    border: 3px solid #dedede;
    border-radius: 12px;
    color: #003427;
    font-weight: 600;
}

.points {
    grid-row: span 2;
    display: flex;
    flex-direction: column;
    align-items: center;
    justify-content: center;
}

.point {
    width: 72px;
    height: 72px;
    border: 5px solid #e0e0e0;
    border-radius: 50%;
    color: #111;
    font-size: 33px;
    font-weight: 700;
    line-height: 60px;
    text-align: center;
}

.point-line {
    height: 66px;
    margin: 12px 0 18px;
    border-left: 3px dashed #dedede;
}

.place {
    display: flex;
    flex-direction: column;
    justify-content: center;
    min-width: 0;
    padding-right: 36px;
    border-bottom: 3px solid #dedede;
}

.place-name {
    font-size: 42px;
    line-height: 56px;
}

.place-address {
    overflow: hidden;
    color: #767676;
    line-height: 54px;
    text-overflow: ellipsis;
    white-space: nowrap;
}

.date {
    display: flex;
    align-items: center;
    padding: 0 36px;
    border-left: 3px solid #dedede;
    border-bottom: 3px solid #dedede;
    font-size: 33px;
    line-height: 48px;
}

.date a {
    text-decoration-thickness: 3px;
    text-underline-offset: 3px;
}

.place:nth-last-child(2) {
    padding-top: 6px;
    border-bottom: none;
}

.date:last-child {
    padding-bottom: 3px;
    border-bottom: none;
}

/* Private / business */
.choices {
    display: flex;
    border: 3px solid #dedede;
    border-radius: 12px;
}

.choice {
    position: relative;
    flex: 1;
    display: flex;
    align-items: center;
    justify-content: center;
    gap: 21px;
    padding-left: 6px;
    color: #767676;
    font-weight: 600;
    line-height: 123px;
}

.choice + .choice {
    border-left: 3px solid #dedede;
}

.choice:has(:checked) {
    color: #003427;
}

.choice-input {
    position: absolute;
    opacity: 0;
}

/* Note */
.note {
    display: flex;
    align-items: center;
    gap: 42px;
    padding: 0 42px;
    border: 3px solid #dedede;
    border-radius: 12px;
}

.note-input {
    flex: 1;
    min-width: 0;
    height: 126px;
    padding: 0 0 3px;
    border: none;
    outline: none;
    background: none;
    font-weight: 600;
}

.note-input::placeholder {
    color: #767676;
}

/* Buttons */
.actions {
    display: flex;
    gap: 24px;
}

.delete-btn {
    display: flex;
    align-items: center;
    justify-content: center;
    width: 144px;
    height: 144px;
    border: 3px solid #dedede;
    border-radius: 12px;
}

.primary-btn {
    flex: 1;
    border-radius: 12px;
    background: #008566;
    color: #fff;
    font-size: 47px;
    font-weight: 600;
}

/* Bottom navigation */
.tab-bar {
    position: relative;
    display: grid;
    grid-template-columns: repeat(5, 1fr);
    justify-items: center;
    align-items: start;
    padding: 15px 0 114px;
    background: #fff;
    border-top: 3px solid #dedede;
}

.tab {
    display: flex;
    flex-direction: column;
    align-items: center;
    color: #757575;
    font-size: 30px;
    line-height: 45px;
    text-decoration: none;
}

.tab.active {
    color: #008566;
}

.add-btn {
    display: flex;
    align-items: center;
    justify-content: center;
    width: 156px;
    height: 156px;
    margin: -30px 0 -9px;
    border: 6px solid #e0e0e0;
    border-radius: 50%;
    background: #fff;
}
```
